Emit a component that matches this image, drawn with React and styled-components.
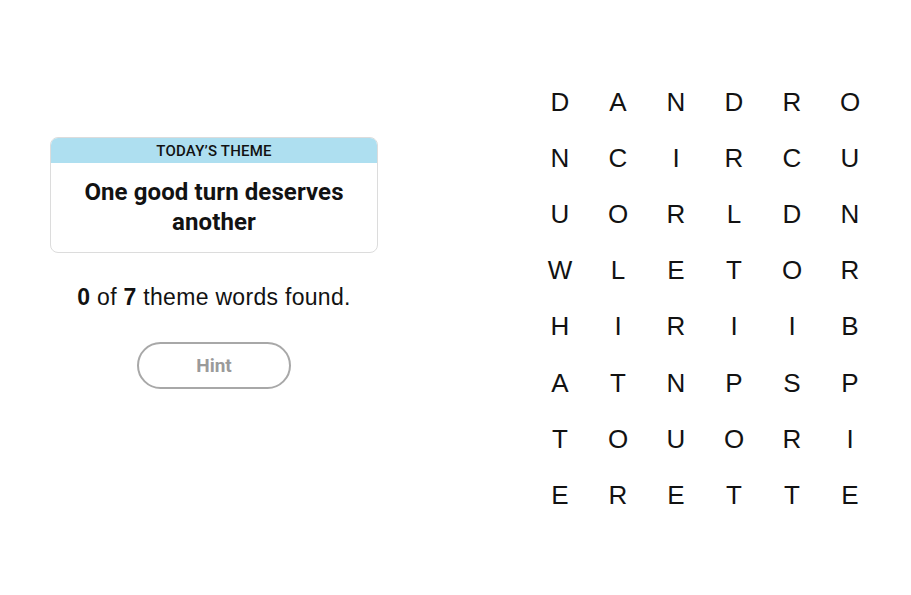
import React from "react";
import styled, { createGlobalStyle } from "styled-components";

const GlobalStyle = createGlobalStyle`
  body {
    margin: 0;
    background: #ffffff;
    font-family: "Liberation Sans", Arial, sans-serif;
    color: #121212;
  }
`;

const letters = [
  "DANDRO",
  "NCIRCU",
  "UORLDN",
  "WLETOR",
  "HIRIIB",
  "ATNPSP",
  "TOUORI",
  "ERETTE",
];

const Page = styled.div`
  display: flex;
  align-items: flex-start;
  gap: 153px;
  padding: 74px 0 0 50px;
  width: 911px;
  height: 595px;
  box-sizing: border-box;
`;

const Side = styled.div`
  display: flex;
  flex-direction: column;
  align-items: center;
  width: 328px;
  margin-top: 63px;
`;

const ThemeCard = styled.div`
  width: 100%;
  border: 1px solid #dcdcdc;
  border-radius: 8px;
  overflow: hidden;
  box-sizing: border-box;
`;

const ThemeHead = styled.div`
  height: 25px;
  background: #aedff0;
  display: flex;
  align-items: center;
  justify-content: center;
  font-family: "Roboto", "Liberation Sans", sans-serif;
  font-size: 15px;
  font-weight: 500;
  letter-spacing: 0.2px;
  color: #121212;
`;

const ThemeTitle = styled.h1`
  margin: 0;
  padding: 14px 20px 15px;
  text-align: center;
  font-family: "Roboto", "Liberation Sans", sans-serif;
  font-size: 24px;
  font-weight: 700;
  line-height: 30px;
  letter-spacing: 0.1px;
  color: #121212;
`;

const Count = styled.p`
  margin: 31px 0 0;
  font-size: 23px;
  line-height: 26px;
  letter-spacing: 0.3px;
  color: #121212;

  b {
    font-weight: 700;
  }
`;

const HintButton = styled.button`
  margin-top: 32px;
  width: 154px;
  height: 47px;
  border: 2px solid #a8a8a8;
  border-radius: 24px;
  background: #ffffff;
  color: #9a9a9a;
  font-family: "Roboto", "Liberation Sans", sans-serif;
  font-size: 19px;
  font-weight: 700;
  cursor: default;
`;

const Board = styled.div`
  display: grid;
  grid-template-columns: repeat(6, 58px);
  grid-auto-rows: 56.2px;
`;

const Cell = styled.div`
  display: flex;
  align-items: center;
  justify-content: center;
  font-family: "Liberation Sans", Arial, sans-serif;
  font-size: 26px;
  color: #121212;
`;

export default function App() {
  return (
    <>
      <GlobalStyle />
      <Page>
        <Side>
          <ThemeCard>
            <ThemeHead>TODAY’S THEME</ThemeHead>
            <ThemeTitle>One good turn deserves another</ThemeTitle>
          </ThemeCard>
          <Count>
            <b>0</b> of <b>7</b> theme words found.
          </Count>
          <HintButton>Hint</HintButton>
        </Side>
        <Board>
          {letters.flatMap((row, r) =>
            row.split("").map((ch, c) => <Cell key={`${r}-${c}`}>{ch}</Cell>)
          )}
        </Board>
      </Page>
    </>
  );
}
